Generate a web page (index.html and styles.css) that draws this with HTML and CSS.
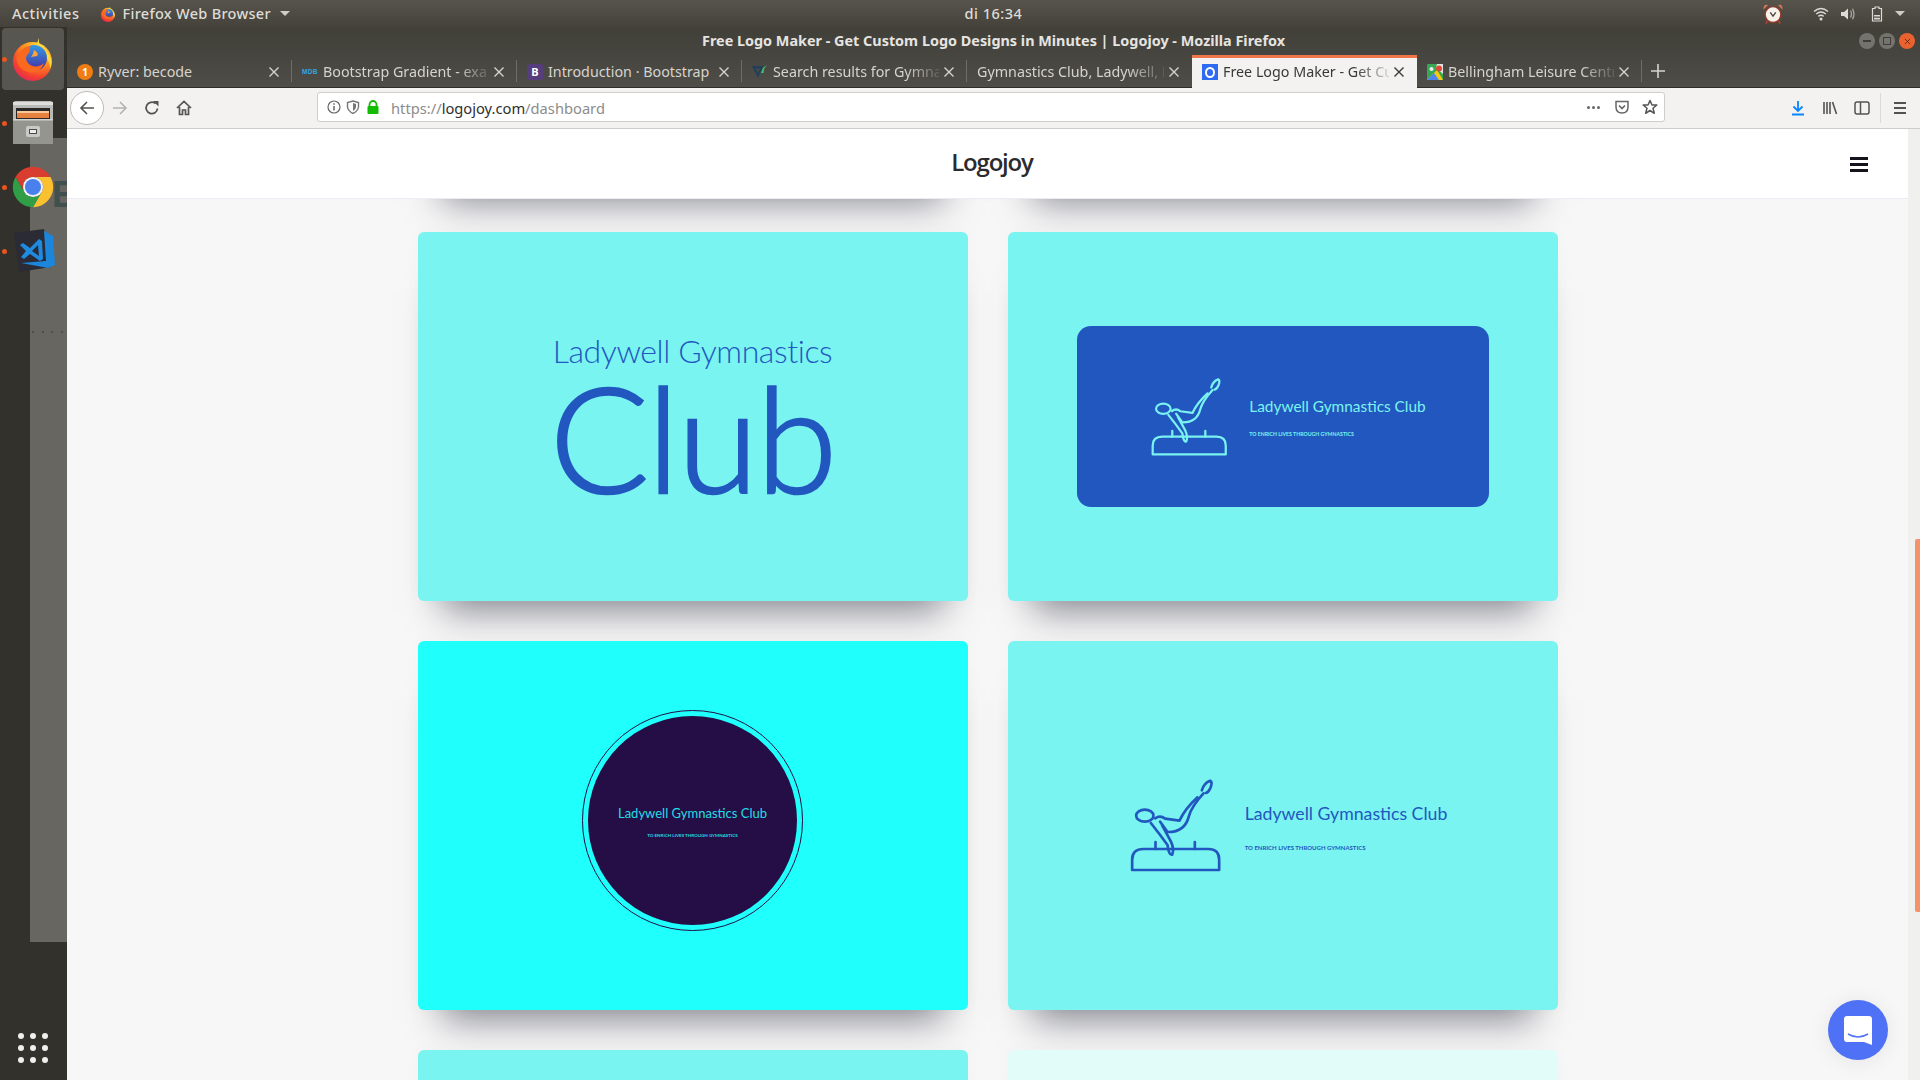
FILE: index.html
```html
<!DOCTYPE html>
<html lang="en">
<head>
<meta charset="utf-8">
<title>Free Logo Maker - Get Custom Logo Designs in Minutes | Logojoy</title>
<link rel="stylesheet" href="styles.css">
</head>
<body>
<svg class="defs" width="0" height="0" aria-hidden="true">
  <defs>
    <symbol id="gym" viewBox="60 55 275 285">
      <g fill="none" stroke="currentColor" stroke-width="8" stroke-linecap="round" stroke-linejoin="round">
        <path d="M66 331V300Q66 268 100 268H294Q327 268 327 300V331Z"/>
        <path d="M136 268V247M254 268V247"/>
        <ellipse cx="104" cy="168" rx="26" ry="18"/>
        <path d="M135 176Q150 165 165 177L208 183Q224 148 262 113"/>
        <path d="M150 186L172 217Q224 218 236 170Q244 140 280 101"/>
        <path d="M275 92Q281 70 300 63Q308 66 301 84Q295 98 287 100"/>
        <path d="M122 190Q150 225 172 256Q176 288 186 285Q193 268 182 245L156 197"/>
      </g>
    </symbol>
    <symbol id="close" viewBox="0 0 12 12">
      <path d="M1.5 1.5L10.5 10.5M10.5 1.5L1.5 10.5" fill="none" stroke="currentColor" stroke-width="1.4"/>
    </symbol>
    <radialGradient id="foxBody" cx="0.7" cy="0.15" r="1">
      <stop offset="0" stop-color="#ffe14a"/>
      <stop offset="0.4" stop-color="#ff9a1f"/>
      <stop offset="0.75" stop-color="#f5402f"/>
      <stop offset="1" stop-color="#d8206a"/>
    </radialGradient>
    <linearGradient id="foxGlobe" x1="0.5" y1="0" x2="0.5" y2="1">
      <stop offset="0" stop-color="#2f9be8"/>
      <stop offset="1" stop-color="#4b2a9c"/>
    </linearGradient>
    <symbol id="firefox" viewBox="0 0 44 44">
      <circle cx="21.5" cy="24.5" r="19.5" fill="url(#foxBody)"/>
      <path d="M28 1C27 7 30 10 35 14C41 19 42 26 39 32C39 22 33 18 29 15C26 12 25 6 28 1Z" fill="#ffd93a"/>
      <circle cx="23" cy="21" r="13" fill="url(#foxGlobe)"/>
      <path d="M6 20C9 12 15 9 20 9C18 12 20 14 17 17C15 19 14 22 17 26C21 31 29 30 33 26C31 33 24 37 17 35C10 33 5 27 6 20Z" fill="#f9691f"/>
      <path d="M23 13C26 15 28 17 26 19L20 20L22 17Z" fill="#ffa23a"/>
    </symbol>
  </defs>
</svg>

<header class="topbar">
  <div class="top-left">
    <span class="top-item">Activities</span>
    <span class="top-app">
      <svg class="ico-16"><use href="#firefox"/></svg>
      <span class="top-item">Firefox Web Browser</span>
      <span class="caret"></span>
    </span>
  </div>
  <div class="top-item">di 16:34</div>
  <div class="top-right">
    <svg class="alarm" viewBox="0 0 20 20">
      <path d="M1.5 6L5.5 1.8L3 1.5Q0.8 3 1.5 6ZM18.5 6L14.5 1.8L17 1.5Q19.2 3 18.5 6Z" fill="#e0735c"/>
      <path d="M5 16L3.5 19M15 16L16.5 19" stroke="#a8442f" stroke-width="1.6"/>
      <circle cx="10" cy="10.5" r="7.2" fill="#f7f1ea" stroke="#8f3a28" stroke-width="1.3"/>
      <path d="M7.5 8.500L10 12L12.5 8.500" fill="none" stroke="#46423c" stroke-width="1.2"/>
    </svg>
    <svg class="wifi" viewBox="0 0 16 14">
      <path d="M1 4.5Q8 -1.5 15 4.5M3.2 7Q8 3 12.8 7M5.4 9.4Q8 7.2 10.6 9.4" fill="none" stroke="#dcdad6" stroke-width="1.4"/>
      <circle cx="8" cy="12" r="1.5" fill="#dcdad6"/>
    </svg>
    <svg class="speaker" viewBox="0 0 16 14">
      <path d="M1 5H4L8 1.5V12.5L4 9H1Z" fill="#dcdad6"/>
      <path d="M10.5 3.5Q12.5 7 10.5 10.500M12.500 1.800Q15.500 7 12.500 12.200" fill="none" stroke="#a9a7a2" stroke-width="1.300"/>
    </svg>
    <svg class="battery" viewBox="0 0 12 16">
      <path d="M4 1H8V2.500H10.500V15H1.500V2.500H4Z" fill="none" stroke="#dcdad6" stroke-width="1.200"/>
      <path d="M3 9H9V10.500H3ZM3 11.800H9V13.500H3Z" fill="#dcdad6"/>
    </svg>
    <span class="caret caret-right"></span>
  </div>
</header>

<div class="desktop">
  <nav class="dock">
    <div class="dock-ghost">
      <span class="ghost-letter">E</span>
      <span class="ghost-dots"><i></i><i></i><i></i><i></i></span>
    </div>
    <div class="dock-item dock-item-active">
      <span class="run-dot"></span>
      <svg class="dock-ico"><use href="#firefox"/></svg>
    </div>
    <div class="dock-item">
      <span class="run-dot"></span>
      <svg class="dock-ico" viewBox="0 0 44 44">
        <path d="M2 3Q2 0 5 0H39Q42 0 42 3V43H2Z" fill="#b9b9b7"/>
        <rect x="2" y="1" width="40" height="3" fill="#dededc"/>
        <rect x="5" y="7" width="34" height="11" fill="#2a2826"/>
        <rect x="6" y="10" width="32" height="2" fill="#f6c79a"/>
        <rect x="6" y="12" width="32" height="5" fill="#e5823f"/>
        <rect x="2" y="18" width="40" height="25" fill="#95958f"/>
        <rect x="2" y="18" width="40" height="1.500" fill="#d2d2cf"/>
        <rect x="15" y="25" width="14" height="11" rx="2" fill="#c9c9c6"/>
        <rect x="18" y="28" width="8" height="5" rx="0.500" fill="#4a4a48"/>
        <rect x="19" y="29" width="6" height="3" fill="#ededeb"/>
      </svg>
    </div>
    <div class="dock-item">
      <span class="run-dot"></span>
      <svg class="dock-ico" viewBox="0 0 48 48">
        <path d="M24 13H43.050A22 22 0 0 0 4.950 13L14.470 29.500A11 11 0 0 1 24 13Z" fill="#d93d30"/>
        <path d="M43.050 13H24A11 11 0 0 1 33.530 29.500L24 46A22 22 0 0 0 43.050 13Z" fill="#fbc02f"/>
        <path d="M4.950 13L14.470 29.500A11 11 0 0 0 33.530 29.500L24 46A22 22 0 0 1 4.950 13Z" fill="#2f9e47"/>
        <circle cx="24" cy="24" r="11" fill="#f2f2f2"/>
        <circle cx="24" cy="24" r="8.800" fill="#4a80ee"/>
      </svg>
    </div>
    <div class="dock-item">
      <span class="run-dot"></span>
      <svg class="dock-ico dock-code" viewBox="0 0 44 44">
        <path d="M1 4L31 0L38 38L6 43Z" fill="#2a2b35"/>
        <path d="M31 2L40 7L42 36L35 39L8 34L33 32Z" fill="#1c86dc"/>
        <path d="M26 10L17 19L10 14L7 16L13 22L8 28L11 30L17 25L27 32L30 30L29 12Z" fill="#1e8ae0"/>
        <path d="M25 16L19 22L26 27Z" fill="#2a2b35"/>
      </svg>
    </div>
    <div class="apps-grid">
      <i></i><i></i><i></i><i></i><i></i><i></i><i></i><i></i><i></i>
    </div>
  </nav>

  <main class="window">
    <div class="titlebar">
      <span class="title-text">Free Logo Maker - Get Custom Logo Designs in Minutes | Logojoy - Mozilla Firefox</span>
      <div class="win-controls">
        <span class="win-btn"><i class="glyph-min"></i></span>
        <span class="win-btn"><i class="glyph-max"></i></span>
        <span class="win-btn win-close"><svg class="win-x"><use href="#close"/></svg></span>
      </div>
    </div>

    <div class="tabstrip">
      <div class="tab tab-sep">
        <span class="fav fav-ryver">1</span>
        <span class="tab-title">Ryver: becode</span>
        <svg class="tab-x"><use href="#close"/></svg>
      </div>
      <div class="tab tab-sep">
        <span class="fav fav-mdb">MDB</span>
        <span class="tab-title tab-fade">Bootstrap Gradient - exa</span>
        <svg class="tab-x"><use href="#close"/></svg>
      </div>
      <div class="tab tab-sep">
        <span class="fav fav-b">B</span>
        <span class="tab-title">Introduction · Bootstrap</span>
        <svg class="tab-x"><use href="#close"/></svg>
      </div>
      <div class="tab tab-sep">
        <svg class="fav" viewBox="0 0 16 16">
          <path d="M0 2H11L6 14Z" fill="#1f3f5e"/>
          <path d="M3 4.500H8.500L6 9Z" fill="#4a4843"/>
          <path d="M9 9L11 4L15 1L12 5L11.500 9Z" fill="#37c97a"/>
        </svg>
        <span class="tab-title tab-fade">Search results for Gymna</span>
        <svg class="tab-x"><use href="#close"/></svg>
      </div>
      <div class="tab">
        <span class="tab-title tab-fade">Gymnastics Club, Ladywell, L</span>
        <svg class="tab-x"><use href="#close"/></svg>
      </div>
      <div class="tab tab-active">
        <span class="fav fav-logojoy"><i></i></span>
        <span class="tab-title tab-fade">Free Logo Maker - Get Cu</span>
        <svg class="tab-x"><use href="#close"/></svg>
      </div>
      <div class="tab tab-sep">
        <svg class="fav" viewBox="0 0 16 16">
          <rect width="16" height="16" rx="1" fill="#37a853"/>
          <path d="M0 16L10 6L16 16Z" fill="#f6c90e"/>
          <path d="M0 16L7 9L12 16Z" fill="#4a86ee"/>
          <path d="M10 0H16V10L9 4Z" fill="#e2e2e2"/>
          <circle cx="12" cy="4.500" r="3" fill="#dc4a38"/>
          <circle cx="4.500" cy="5" r="2" fill="#e8f2e8"/>
        </svg>
        <span class="tab-title tab-fade">Bellingham Leisure Centr</span>
        <svg class="tab-x"><use href="#close"/></svg>
      </div>
      <svg class="tab-plus" viewBox="0 0 14 14"><path d="M7 0V14M0 7H14" stroke="#d6d4d0" stroke-width="1.600"/></svg>
    </div>

    <div class="toolbar">
      <div class="tool-group">
        <span class="back-btn">
          <svg class="ico-16" viewBox="0 0 16 16"><path d="M15 8H2M8 2L2 8L8 14" fill="none" stroke="#55534f" stroke-width="1.600"/></svg>
        </span>
        <svg class="ico-16 tool-fwd" viewBox="0 0 16 16"><path d="M1 8H14M8 2L14 8L8 14" fill="none" stroke="#b4b3b0" stroke-width="1.600"/></svg>
        <svg class="ico-16 tool-reload" viewBox="0 0 16 16"><path d="M13.500 8.500A5.700 5.700 0 1 1 11.500 3.500" fill="none" stroke="#55534f" stroke-width="1.800"/><path d="M9 1H14.500V6.500Z" fill="#55534f"/></svg>
        <svg class="ico-16 tool-home" viewBox="0 0 16 16"><path d="M1 8L8 1.500L15 8M3.500 7V14.500H6.500V10H9.500V14.500H12.500V7" fill="none" stroke="#55534f" stroke-width="1.700"/></svg>
      </div>
      <div class="urlbar">
        <svg class="ico-14" viewBox="0 0 14 14"><circle cx="7" cy="7" r="6" fill="none" stroke="#666" stroke-width="1.200"/><path d="M7 6V10.500M7 3.200V4.800" stroke="#666" stroke-width="1.500"/></svg>
        <svg class="ico-14 url-shield" viewBox="0 0 14 14"><path d="M7 1L12.500 2.500V7Q12 11 7 13.500Q2 11 1.500 7V2.500Z" fill="none" stroke="#777" stroke-width="1.400"/><path d="M7 3L10 4V7Q10 9.500 7 11Z" fill="#777"/></svg>
        <svg class="ico-14 url-lock" viewBox="0 0 14 14"><path d="M3.500 6V4.500A3.500 3.500 0 0 1 10.500 4.500V6" fill="none" stroke="#12bc00" stroke-width="1.800"/><rect x="1.500" y="6" width="11" height="8" rx="1" fill="#12bc00"/></svg>
        <span class="url-text">https://<b class="url-domain">logojoy.com</b>/dashboard</span>
        <span class="url-more"><i></i><i></i><i></i></span>
        <svg class="ico-16 url-pocket" viewBox="0 0 16 16"><path d="M2 2.500H14V8Q14 14 8 14Q2 14 2 8Z" fill="none" stroke="#666" stroke-width="1.500"/><path d="M5 6.500L8 9.500L11 6.500" fill="none" stroke="#666" stroke-width="1.700"/></svg>
        <svg class="ico-16 url-star" viewBox="0 0 16 16"><path d="M8 1.500L10 6H14.800L11 9.300L12.300 14.300L8 11.500L3.700 14.300L5 9.300L1.200 6H6Z" fill="none" stroke="#555" stroke-width="1.500" stroke-linejoin="round"/></svg>
      </div>
      <div class="tool-right">
        <svg class="ico-16" viewBox="0 0 16 16"><path d="M8 1V11M3.500 6.500L8 11L12.500 6.500M2 14.500H14" fill="none" stroke="#0a84ff" stroke-width="1.800"/></svg>
        <svg class="ico-16 tool-lib" viewBox="0 0 16 16"><path d="M2 2V14M5 2V14M8 2V14M10.500 2L14.500 14" fill="none" stroke="#55534f" stroke-width="1.600"/></svg>
        <svg class="ico-16 tool-side" viewBox="0 0 16 16"><rect x="1" y="2" width="14" height="12" rx="2" fill="none" stroke="#55534f" stroke-width="1.500"/><path d="M6.500 2V14" stroke="#55534f" stroke-width="1.500"/></svg>
        <span class="tool-sep"></span>
        <svg class="ico-16" viewBox="0 0 16 16"><path d="M2 3H14M2 8H14M2 13H14" stroke="#55534f" stroke-width="1.800"/></svg>
      </div>
    </div>

    <div class="viewport">
      <div class="page">
        <div class="nav">
          <span class="brand">Logojoy</span>
          <span class="burger"><i></i><i></i><i></i></span>
        </div>
        <div class="cards">
          <div class="card card-mint"></div>
          <div class="card card-mint"></div>

          <div class="card card-mint">
            <div class="stacked">
              <span class="stacked-top">Ladywell Gymnastics</span>
              <span class="stacked-big">Club</span>
            </div>
          </div>

          <div class="card card-mint">
            <div class="plate">
              <div class="lockup lockup-sm">
                <svg class="gym-sm"><use href="#gym"/></svg>
                <div class="lockup-text text-sm">
                  <span class="name-sm">Ladywell Gymnastics Club</span>
                  <span class="tag-sm">TO ENRICH LIVES THROUGH GYMNASTICS</span>
                </div>
              </div>
            </div>
          </div>

          <div class="card card-cyan">
            <div class="ring">
              <div class="disc">
                <span class="name-xs">Ladywell Gymnastics Club</span>
                <span class="tag-xs">TO ENRICH LIVES THROUGH GYMNASTICS</span>
              </div>
            </div>
          </div>

          <div class="card card-mint">
            <div class="lockup lockup-lg">
              <svg class="gym-lg"><use href="#gym"/></svg>
              <div class="lockup-text text-lg">
                <span class="name-lg">Ladywell Gymnastics Club</span>
                <span class="tag-lg">TO ENRICH LIVES THROUGH GYMNASTICS</span>
              </div>
            </div>
          </div>

          <div class="card card-mint"></div>
          <div class="card card-pale"></div>
        </div>
        <button class="chat" type="button" aria-label="Open chat">
          <svg class="chat-ico" viewBox="0 0 28 30">
            <path d="M3 0H25Q28 0 28 3V29L20 26H3Q0 26 0 23V3Q0 0 3 0Z" fill="#fff"/>
            <path d="M4 18Q14 24 24 18" fill="none" stroke="#4f71f5" stroke-width="1.500"/>
          </svg>
        </button>
      </div>
      <div class="scrollbar"><span class="thumb"></span></div>
    </div>
  </main>
</div>
</body>
</html>
```

FILE: styles.css
```css
* { box-sizing: border-box; }
html, body { margin: 0; height: 100%; overflow: hidden; }
body {
  width: 1920px;
  height: 1080px;
  display: flex;
  flex-direction: column;
  font-family: "Noto Sans", "Open Sans", sans-serif;
  background: #33312c;
}
i { display: block; font-style: normal; }
.defs { position: absolute; }
.ico-16 { width: 16px; height: 16px; flex: none; }
.ico-14 { width: 14px; height: 14px; flex: none; }

/* system top bar */
.topbar {
  height: 27px;
  flex: none;
  display: grid;
  grid-template-columns: 1fr auto 1fr;
  align-items: center;
  padding-left: 67px;
  background: linear-gradient(#57544c, #44423b);
  color: #dedcd7;
}
.top-left { display: flex; align-items: center; margin-left: -55px; }
.top-app { display: flex; align-items: center; margin-left: 21px; }
.top-app .top-item { margin-left: 6px; letter-spacing: 0.3px; }
.top-item { font-size: 14.5px; font-weight: 500; line-height: 27px; letter-spacing: 0.5px; }
.caret {
  width: 0; height: 0; margin-left: 9px;
  border-left: 5px solid transparent;
  border-right: 5px solid transparent;
  border-top: 5px solid #cfcdc8;
}
.top-right { display: flex; align-items: center; justify-content: flex-end; padding-right: 15px; }
.alarm { width: 22px; height: 22px; margin-right: 29px; }
.wifi { width: 16px; height: 14px; margin-right: 11px; }
.speaker { width: 16px; height: 14px; margin-right: 15px; }
.battery { width: 12px; height: 16px; margin-right: 12px; }
.caret-right { margin-left: 0; }

/* layout under the top bar */
.desktop { flex: 1; display: flex; min-height: 0; }

/* dock */
.dock {
  width: 67px;
  flex: none;
  position: relative;
  display: flex;
  flex-direction: column;
  background: #33312c;
}
.dock-ghost {
  position: absolute;
  left: 30px; right: 0;
  top: 111px;
  height: 804px;
  background: #676660;
  overflow: hidden;
}
.ghost-letter {
  position: absolute;
  left: 22px; top: 36px;
  font-family: "Liberation Sans", sans-serif;
  font-weight: 700;
  font-size: 36px;
  line-height: 42px;
  color: #3f504f;
}
.ghost-dots { position: absolute; left: 2px; top: 193px; display: flex; gap: 7.500px; }
.ghost-dots i { width: 2px; height: 2px; background: #4e4e4a; }
.dock-item {
  position: relative;
  height: 64px;
  display: flex;
  align-items: center;
  justify-content: center;
  flex: none;
  padding-right: 1px;
}
.dock-item-active::before {
  content: "";
  position: absolute;
  left: 2px; right: 3px; top: 1px; bottom: 1px;
  background: #575650;
  border-radius: 4px;
}
.run-dot {
  position: absolute;
  left: 2px; top: 29.500px;
  width: 5px; height: 5px;
  border-radius: 50%;
  background: #e9541f;
}
.dock-ico { position: relative; width: 44px; height: 44px; }
.dock-code { margin-left: 3px; }
.apps-grid {
  margin-top: auto;
  margin-bottom: 17px;
  margin-left: 18px;
  display: grid;
  grid-template-columns: repeat(3, 6px);
  gap: 6px;
}
.apps-grid i { width: 6px; height: 6px; border-radius: 50%; background: #efefed; }

/* browser window */
.window { flex: 1; min-width: 0; display: flex; flex-direction: column; }
.titlebar {
  height: 28px;
  flex: none;
  display: flex;
  align-items: center;
  justify-content: center;
  position: relative;
  background: linear-gradient(#403f38, #47453f);
}
.title-text { font-size: 14.400px; font-weight: 700; color: #e6e4e0; margin-bottom: 2px; }
.win-controls {
  position: absolute;
  right: 5px; top: 6px;
  display: flex;
  gap: 4px;
}
.win-btn {
  width: 16px; height: 16px;
  border-radius: 50%;
  background: #74736d;
  display: flex;
  align-items: center;
  justify-content: center;
}
.glyph-min { width: 8px; height: 1.500px; background: #3e3d38; }
.glyph-max { width: 8px; height: 8px; border: 1px solid #3e3d38; }
.win-close { background: #e9622f; }
.win-x { width: 7px; height: 7px; color: #5a2410; }

.tabstrip {
  height: 33px;
  flex: none;
  display: flex;
  align-items: flex-end;
  background: linear-gradient(#47453f, #4f4d47);
  border-bottom: 1px solid #2e2d29;
}
.tab {
  width: 225px;
  height: 32px;
  flex: none;
  display: flex;
  align-items: center;
  padding: 2px 12px 0 10px;
  color: #d6d4cf;
  position: relative;
}
.tab-sep::after {
  content: "";
  position: absolute;
  right: 0; top: 5px; bottom: 5px;
  width: 1px;
  background: #6f6d67;
}
.tab-active {
  height: 33px;
  margin-bottom: -1px;
  padding-top: 0;
  padding-bottom: 2px;
  background: #f3f2f0;
  color: #3a3936;
  border-top: 3px solid #f0764a;
}
.fav { width: 16px; height: 16px; flex: none; margin-right: 5px; }
.fav-ryver {
  border-radius: 50%;
  background: #ef7d13;
  color: #fff;
  font-size: 10px;
  line-height: 16px;
  text-align: center;
  font-weight: 700;
}
.fav-mdb {
  color: #33a6e0;
  font-family: "Liberation Sans", sans-serif;
  font-size: 6.500px;
  font-weight: 700;
  line-height: 16px;
  letter-spacing: 0.300px;
}
.fav-b {
  background: #563d7c;
  border-radius: 2px;
  color: #fff;
  font-size: 11px;
  font-weight: 700;
  line-height: 16px;
  text-align: center;
}
.fav-logojoy {
  background: #2f6bf0;
  display: flex;
  align-items: center;
  justify-content: center;
}
.fav-logojoy i { width: 10px; height: 11px; border: 2px solid #fff; border-radius: 50%; }
.tab-title {
  flex: 1;
  min-width: 0;
  white-space: nowrap;
  font-size: 14.300px;
  line-height: 20px;
}
.tab-fade {
  -webkit-mask-image: linear-gradient(to right, #000 80%, rgba(0, 0, 0, 0.15) 100%);
  mask-image: linear-gradient(to right, #000 80%, rgba(0, 0, 0, 0.15) 100%);
}
.tab-x { width: 12px; height: 12px; margin-left: 4px; flex: none; }
.tab-plus { width: 14px; height: 14px; margin: 0 0 9px 9px; flex: none; }

/* toolbar */
.toolbar {
  height: 41px;
  flex: none;
  display: flex;
  align-items: center;
  background: #f3f2f0;
  border-bottom: 1px solid #cdccc9;
}
.tool-group { width: 250px; display: flex; align-items: center; padding-left: 3px; flex: none; }
.back-btn {
  width: 34px; height: 34px;
  border-radius: 50%;
  border: 1px solid #bcbbb8;
  background: #fff;
  display: flex;
  align-items: center;
  justify-content: center;
}
.tool-fwd { margin-left: 8px; }
.tool-reload { margin-left: 16px; }
.tool-home { margin-left: 16px; }
.urlbar {
  width: 1348px;
  height: 30px;
  flex: none;
  margin-top: -2px;
  display: flex;
  align-items: center;
  padding: 0 6px 0 9px;
  background: #fff;
  border: 1px solid #cfcecb;
  border-radius: 3px;
}
.url-shield { margin-left: 5px; }
.url-lock { margin-left: 6px; }
.url-text { margin: 2px 0 0 11px; font-size: 14.700px; color: #8c8c8c; white-space: nowrap; }
.url-domain { font-weight: 400; color: #2f2f2f; }
.url-more { margin-left: auto; display: flex; gap: 2px; }
.url-more i { width: 3px; height: 3px; border-radius: 50%; background: #666; }
.url-pocket { margin-left: 14px; }
.url-star { margin-left: 12px; }
.tool-right { flex: 1; display: flex; align-items: center; padding-left: 125px; margin-top: -1px; }
.tool-lib { margin-left: 16px; }
.tool-side { margin-left: 16px; }
.tool-sep { width: 1px; height: 30px; background: #dcdbd8; margin: 0 11px 0 10px; }

/* web page */
.viewport { flex: 1; display: flex; min-height: 0; }
.page {
  flex: 1;
  min-width: 0;
  position: relative;
  background: #f7f7f7;
  overflow: hidden;
}
.nav {
  height: 70px;
  position: relative;
  z-index: 2;
  display: grid;
  grid-template-columns: 1fr auto 1fr;
  align-items: center;
  padding: 0 40px 0 49px;
  background: #fff;
  border-bottom: 1px solid #ecedf2;
}
.brand {
  grid-column: 2;
  font-family: "Open Sans", sans-serif;
  font-size: 24px;
  font-weight: 600;
  letter-spacing: -1.200px;
  line-height: 30px;
  margin-bottom: 3px;
  color: #2b2b2e;
}
.burger { justify-self: end; width: 18px; margin-top: 2px; display: flex; flex-direction: column; gap: 3.500px; }
.burger i { height: 2.500px; background: #14141c; }
.cards {
  display: grid;
  grid-template-columns: repeat(2, 550px);
  grid-auto-rows: 369px;
  gap: 40px;
  justify-content: center;
  margin-top: -376px;
}
.card {
  border-radius: 6px;
  display: flex;
  align-items: center;
  justify-content: center;
  box-shadow: 0 35px 35px -25px rgba(40, 42, 60, 0.55), 0 0 18px rgba(0, 0, 0, 0.025);
}
.card-mint { background: #79f4f0; color: #2257bf; }
.card-cyan { background: #1ffffc; }
.card-pale { background: #e2fcfa; }

/* logo: stacked */
.stacked {
  display: flex;
  flex-direction: column;
  align-items: center;
  font-family: Lato, sans-serif;
}
.stacked-top { font-size: 32px; font-weight: 300; line-height: 38px; letter-spacing: -0.400px; }
.stacked-big {
  font-size: 147px;
  font-weight: 300;
  line-height: 130px;
  letter-spacing: -2px;
  margin-top: 1px;
  -webkit-text-stroke: 2.500px #2257bf;
}

/* logo: plate */
.plate {
  width: 412px;
  height: 181px;
  border-radius: 14px;
  background: #2257bf;
  color: #7af3f0;
  display: flex;
  align-items: center;
  justify-content: center;
}
.lockup { display: flex; align-items: center; font-family: Lato, sans-serif; margin-left: 12px; }
.lockup-text { display: flex; flex-direction: column; align-items: flex-start; }
.text-sm { margin-top: 1px; }
.text-lg { margin-top: 3px; }
.gym-sm { width: 77px; height: 80px; margin-right: 21px; }
.gym-lg { width: 92px; height: 95px; margin-right: 23px; }
.name-sm { font-size: 15.400px; line-height: 20px; white-space: nowrap; }
.tag-sm { font-size: 5.200px; font-weight: 700; line-height: 8px; margin-top: 14px; white-space: nowrap; }
.name-lg { font-size: 17.700px; line-height: 24px; white-space: nowrap; }
.tag-lg { font-size: 6px; font-weight: 700; line-height: 8px; margin-top: 18px; white-space: nowrap; }

/* logo: circle */
.ring {
  width: 221px;
  height: 221px;
  margin-bottom: 10px;
  padding: 5px;
  border: 1.500px solid #240e45;
  border-radius: 50%;
  display: flex;
}
.disc {
  flex: 1;
  border-radius: 50%;
  background: #240e45;
  color: #22dde6;
  display: flex;
  flex-direction: column;
  align-items: center;
  font-family: Lato, sans-serif;
  padding-top: 88px;
}
.name-xs { font-size: 13px; line-height: 18px; white-space: nowrap; }
.tag-xs { font-size: 4.500px; font-weight: 700; line-height: 6px; margin-top: 11px; white-space: nowrap; }

/* chat launcher */
.chat {
  position: absolute;
  right: 20px;
  bottom: 20px;
  width: 60px;
  height: 60px;
  padding: 0;
  border: 0;
  border-radius: 50%;
  background: #4f71f5;
  box-shadow: 0 2px 22px rgba(0, 0, 0, 0.08);
  display: flex;
  align-items: center;
  justify-content: center;
}
.chat-ico { width: 28px; height: 30px; margin-top: 2px; }

/* scrollbar */
.scrollbar { width: 12px; flex: none; background: #f0f0ee; position: relative; }
.thumb {
  position: absolute;
  left: 7px; right: 0;
  top: 410px;
  height: 373px;
  border-radius: 2px 0 0 2px;
  background: #f4936a;
}
```
